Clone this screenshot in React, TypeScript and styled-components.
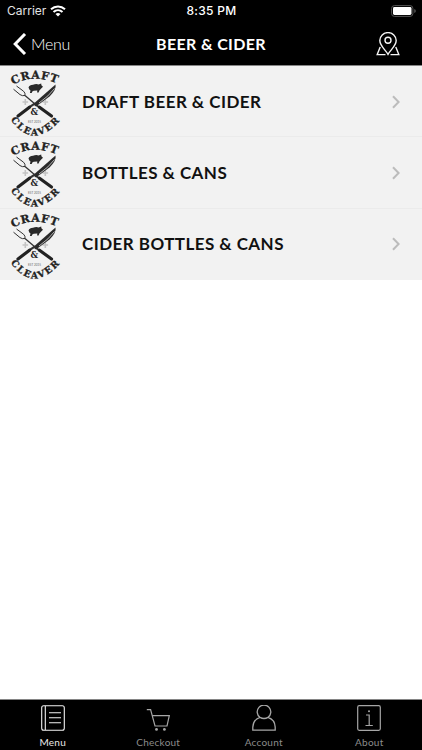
import React from 'react';
import styled, { createGlobalStyle } from 'styled-components';

const GlobalStyle = createGlobalStyle`
  * {
    box-sizing: border-box;
  }

  body {
    margin: 0;
    background: #fff;
    font-family: Lato, 'Open Sans', sans-serif;
  }
`;

const Screen = styled.div`
  height: 100vh;
  display: flex;
  flex-direction: column;
  overflow: hidden;
`;

const Header = styled.header`
  flex: 0 0 66px;
  background: #000;
  color: #fff;
  border-bottom: 1px solid #858585;
`;

const StatusBar = styled.div`
  height: 22px;
  padding: 0 6px 0 7px;
  display: grid;
  grid-template-columns: 1fr auto 1fr;
  align-items: center;
  font-family: Inter, sans-serif;
  font-size: 12px;
  line-height: 22px;
`;

const Carrier = styled.div`
  display: flex;
  align-items: center;
  gap: 4px;
  font-size: 12px;
  color: #e4e4e4;
`;

const Time = styled.div`
  font-weight: 500;
  letter-spacing: 0.3px;
`;

const Battery = styled.div`
  display: flex;
  justify-content: flex-end;
`;

const NavBar = styled.div`
  height: 43px;
  padding: 0 22px 0 12px;
  display: grid;
  grid-template-columns: 1fr auto 1fr;
  align-items: center;
`;

const BackButton = styled.a`
  display: flex;
  align-items: center;
  gap: 4px;
  font-size: 16px;
  font-weight: 300;
  letter-spacing: -0.3px;
`;

const Title = styled.h1`
  margin: 0 0 0 10px;
  font-size: 16px;
  line-height: 20px;
  font-weight: 700;
  letter-spacing: 0.35px;
`;

const LocationButton = styled.div`
  display: flex;
  justify-content: flex-end;
`;

const List = styled.div`
  flex: 1;
`;

const Row = styled.div`
  height: 71.4px;
  padding: 0.7px 22px 0 0;
  display: flex;
  align-items: center;
  background: #f2f2f2;
  border-bottom: 1px solid #ebebeb;

  &:last-child {
    border-bottom-color: #f2f2f2;
  }
`;

const RowTitle = styled.div`
  flex: 1;
  padding-left: 10px;
  font-size: 17px;
  line-height: 20px;
  font-weight: 700;
  letter-spacing: 0.45px;
  color: #111;
  white-space: nowrap;
`;

const TabBar = styled.nav`
  flex: 0 0 51px;
  display: flex;
  background: #000;
  border-top: 1px solid #858585;
`;

const Tab = styled.a<{ $active?: boolean }>`
  flex: 1;
  display: flex;
  flex-direction: column;
  align-items: center;
  padding-top: 5px;
  font-size: 10px;
  line-height: 12px;
  letter-spacing: 0.25px;
  color: ${(p) => (p.$active ? '#e8e8e8' : '#8c8c8c')};

  svg {
    display: block;
    margin-bottom: 5px;
  }
`;

const WifiIcon = () => (
  <svg width="16" height="12" viewBox="0 0 16 12" fill="none" stroke="#fff" strokeWidth="2">
    <path d="M1 4.3C5 .5 11 .5 15 4.3" />
    <path d="M3.5 7C6.1 4.5 9.9 4.5 12.5 7" />
    <path d="M8 11.5 5.5 9Q8 7 10.5 9Z" fill="#fff" stroke="none" />
  </svg>
);

const BatteryIcon = () => (
  <svg width="25" height="12" viewBox="0 0 25 12">
    <rect x=".6" y=".6" width="21.3" height="10.8" rx="2.8" fill="none" stroke="#555" />
    <rect x="2" y="2" width="18.5" height="8" rx="1.4" fill="#fff" />
    <path d="M23.4 4v4q1.3-.6 1.3-2t-1.3-2Z" fill="#666" />
  </svg>
);

const BackIcon = () => (
  <svg width="15" height="22" viewBox="0 0 15 22" fill="none" stroke="#fff" strokeWidth="3">
    <path d="M13 1 3.2 11 13 21" />
  </svg>
);

const MapIcon = () => (
  <svg width="24" height="24" viewBox="0 0 24 24" fill="none" stroke="#f5f5f5" strokeWidth="1.4">
    <path d="M12 22.3C9.6 18 3.8 14 3.8 8.6a8.2 8 0 0 1 16.4 0C20.2 14 14.4 18 12 22.3Z" />
    <circle cx="12" cy="8.3" r="3" />
    <path d="M4.2 15 1.2 22.6H9.5M14.5 22.6H22.8L19.8 15" />
  </svg>
);

const ChevronIcon = () => (
  <svg width="8" height="14" viewBox="0 0 8 14" fill="none" stroke="#bcbcbc" strokeWidth="2">
    <path d="M1 1.2 6.6 7 1 12.8" />
  </svg>
);

const BrandLogo = ({ id }: { id: string }) => (
  <svg width="72" height="71" viewBox="0 0 72 71" fill="none">
    <path id={`${id}-top`} d="M13 19Q35 6 62 20" />
    <path id={`${id}-bottom`} d="M10.5 53.5Q33 85.5 61 53.5" />
    <g fill="#222" stroke="#222" strokeWidth=".3" fontFamily="'DejaVu Serif', serif" fontWeight="700">
      <text fontSize="11">
        <textPath href={`#${id}-top`} textLength="45.5" lengthAdjust="spacing">CRAFT</textPath>
      </text>
      <text fontSize="9.2">
        <textPath href={`#${id}-bottom`} textLength="60" lengthAdjust="spacing">CLEAVER</textPath>
      </text>
      <text x="34.3" y="49" fontSize="8.5" strokeWidth="0" textAnchor="middle">&amp;</text>
    </g>
    <text x="34.5" y="56.5" fontSize="3" fill="#666" textAnchor="middle" fontFamily="Lato, sans-serif">EST 2015</text>
    <path d="M28.5 21.5q1-2.8 4.5-2.8 3-1 5.6-.3l2.6-.8.2 1.7 1.6 1.4-1.8 1.7-1.8 2-.8 2.2h-1.5l.2-2-3.6.1-1.4.8-.6 1.6H29.9l.6-2.6-1-.8Z" fill="#292929" />
    <path d="M25.3 33v6M22.5 36h5.6M45.3 33v6M42.5 36h5.6" stroke="#c4c4c4" strokeWidth="1.6" />
    <path d="M25 29.5 35 38" stroke="#333" strokeWidth="1.3" />
    <path d="M13.5 23.2 20 28.6q2.2 1.6 5 .9.6-2.5-1.5-4.3l-7-5.2" stroke="#333" strokeWidth="1" />
    <path d="M35 38 40 42" stroke="#333" strokeWidth="2" />
    <path d="M39.5 41.2 51.5 50" stroke="#222" strokeWidth="3.2" strokeLinecap="round" />
    <path d="M55.5 18.5q1.2 5-6 12L36 40.5l-3-2.2Z" fill="#2a2a2a" />
    <path d="M54.5 22.5Q49 30 39 37" stroke="#f2f2f2" strokeWidth=".7" />
    <path d="M35 37.3 28 42.2" stroke="#333" strokeWidth="2.2" />
    <path d="M29.5 41.2 18 50" stroke="#222" strokeWidth="3.2" strokeLinecap="round" />
  </svg>
);

const MenuIcon = () => (
  <svg width="24" height="26" viewBox="0 0 24 26" fill="none" stroke="#f2f2f2" strokeWidth="1.1">
    <rect x=".7" y=".7" width="22.6" height="24.6" rx="2" />
    <path d="M4.3 1v24M8 7.7h12M8 12.8h12M8 17.8h12" />
  </svg>
);

const CartIcon = () => (
  <svg width="24" height="26" viewBox="0 0 24 26" fill="none" stroke="#a6a6a6" strokeWidth="1.2">
    <path d="M.8 4.7h3.8L9 21h12l2.3-10.3H6.2" />
    <circle cx="10.5" cy="24.4" r="1.4" fill="#a6a6a6" stroke="none" />
    <circle cx="18.4" cy="24.4" r="1.4" fill="#a6a6a6" stroke="none" />
  </svg>
);

const AccountIcon = () => (
  <svg width="24" height="26" viewBox="0 0 24 26" fill="none" stroke="#a6a6a6" strokeWidth="1.3">
    <path d="M8 12.4a6.8 6.8 0 1 1 8 0q6.9 2.3 7.2 9.7v3.1H.8v-3.1Q1.1 14.7 8 12.4Q12 14.6 16 12.4" />
  </svg>
);

const AboutIcon = () => (
  <svg width="24" height="26" viewBox="0 0 24 26" fill="none" stroke="#a6a6a6" strokeWidth="1.2">
    <rect x=".7" y=".7" width="22.6" height="24.6" rx="1.5" />
    <path d="M9 10h3.2v10.5M8.5 20.5h7.3" />
    <circle cx="12" cy="6.3" r="1" fill="#a6a6a6" stroke="none" />
  </svg>
);

const categories = [
  { id: 'draft', title: 'DRAFT BEER & CIDER' },
  { id: 'bottles', title: 'BOTTLES & CANS' },
  { id: 'cider', title: 'CIDER BOTTLES & CANS' },
];

const App = () => {
  return (
    <Screen>
      <GlobalStyle />
      <Header>
        <StatusBar>
          <Carrier>
            Carrier
            <WifiIcon />
          </Carrier>
          <Time>8:35 PM</Time>
          <Battery>
            <BatteryIcon />
          </Battery>
        </StatusBar>
        <NavBar>
          <BackButton>
            <BackIcon />
            Menu
          </BackButton>
          <Title>BEER &amp; CIDER</Title>
          <LocationButton>
            <MapIcon />
          </LocationButton>
        </NavBar>
      </Header>

      <List>
        {categories.map((item) => (
          <Row key={item.id}>
            <BrandLogo id={item.id} />
            <RowTitle>{item.title}</RowTitle>
            <ChevronIcon />
          </Row>
        ))}
      </List>

      <TabBar>
        <Tab $active>
          <MenuIcon />
          Menu
        </Tab>
        <Tab>
          <CartIcon />
          Checkout
        </Tab>
        <Tab>
          <AccountIcon />
          Account
        </Tab>
        <Tab>
          <AboutIcon />
          About
        </Tab>
      </TabBar>
    </Screen>
  );
};

export default App;
